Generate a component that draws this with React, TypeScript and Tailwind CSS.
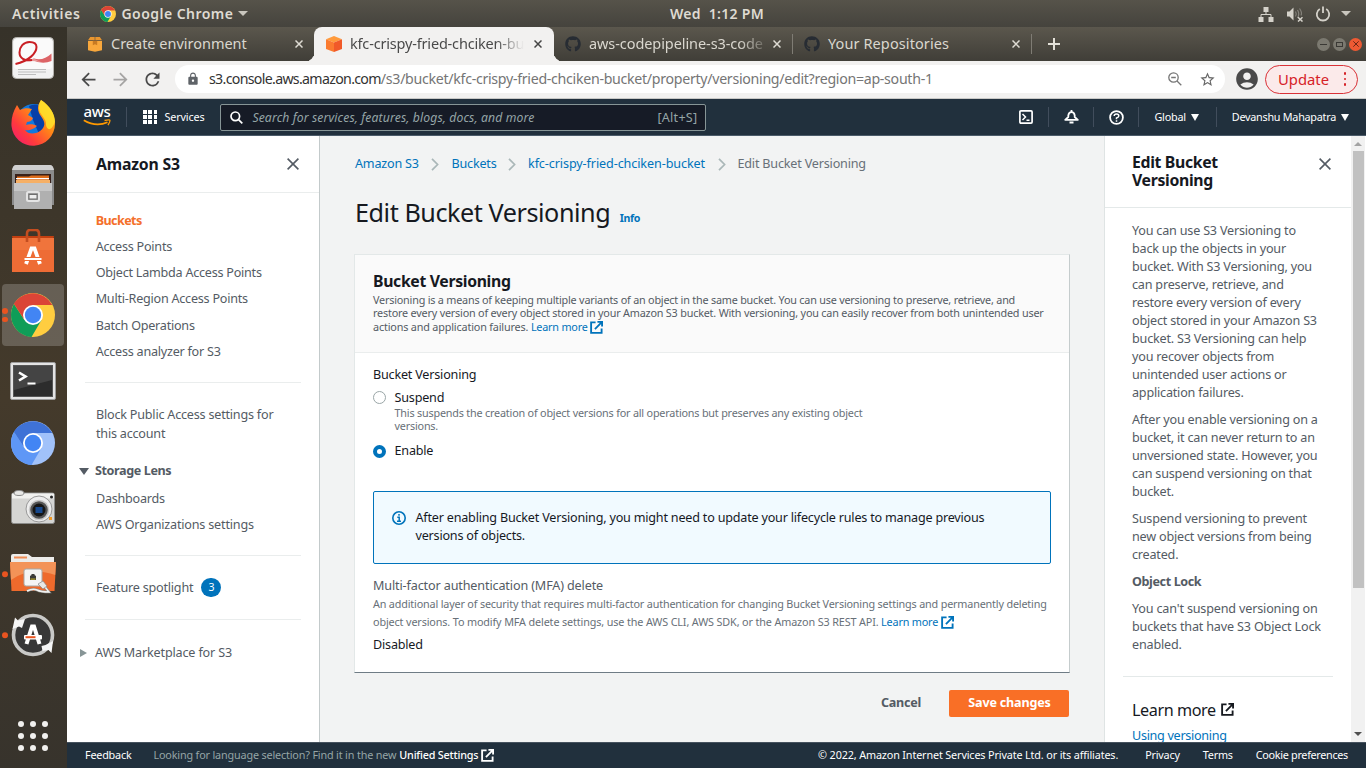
import type { ReactNode } from "react";
import { FaGithub } from "react-icons/fa";
import { MdAccountCircle, MdArrowBack, MdArrowForward, MdLock, MdRefresh, MdStarBorder } from "react-icons/md";

/* ---------- shared icons ---------- */

function ExternalIcon({ className }: { className?: string }) {
  return (
    <svg viewBox="0 0 14 14" className={className} fill="none" stroke="currentColor" strokeWidth="2">
      <path d="M6 1.5H1.2v11.3h11.3V8" />
      <path d="M8 1h5v5M12.7 1.3L5.3 8.7" />
    </svg>
  );
}

function CloseIcon({ className }: { className?: string }) {
  return (
    <svg viewBox="0 0 12 12" className={className} fill="none" stroke="currentColor" strokeWidth="1.6">
      <path d="M.6.6l10.8 10.8M11.4.6L.6 11.4" />
    </svg>
  );
}

function ChromeIcon({ className, colors }: { className?: string; colors: [string, string, string, string] }) {
  const [top, right, left, core] = colors;
  return (
    <svg viewBox="0 0 44 44" className={className}>
      <circle cx="22" cy="22" r="22" fill={right} />
      <path d="M22 22L3 11A22 22 0 0 1 41 12H22z" fill={top} />
      <path d="M3 11A22 22 0 0 0 20.5 44L30.5 27 13.500 27z" fill={left} />
      <path d="M3 11L13.500 27 22 12H41A22 22 0 0 0 3 11z" fill={top} />
      <circle cx="22" cy="22" r="10" fill="#fff" />
      <circle cx="22" cy="22" r="8.200" fill={core} />
    </svg>
  );
}

const chromeColors: [string, string, string, string] = ["#db4437", "#ffcd40", "#0f9d58", "#4285f4"];
const chromiumColors: [string, string, string, string] = ["#3f72d6", "#a1c2fa", "#5e97f6", "#4285f4"];

/* ---------- desktop top bar ---------- */

function DesktopBar() {
  return (
    <header className="flex h-[27px] shrink-0 items-center bg-linear-to-b from-[#56534a] to-[#45433d] text-[14px] font-semibold text-[#dfdbd2]">
      <span className="ml-[12px] w-[88px] tracking-[0.6px]">Activities</span>
      <ChromeIcon className="size-[16px]" colors={chromeColors} />
      <span className="ml-[5.500px] w-[112px] tracking-[0.45px]">Google Chrome</span>
      <span className="ml-[4px] border-x-[5px] border-t-[5px] border-x-transparent border-t-[#c9c6be]" />
      <span className="ml-[422.500px] whitespace-pre tracking-[0.3px]">Wed  1:12 PM</span>
      <div className="ml-auto flex items-center pr-[15px]">
        <svg viewBox="0 0 16 16" className="size-[16px]" fill="#d5d2ca">
          <path d="M5.500 1h5v5h-5zM.5 11h5v5h-5zM10.500 11h5v5h-5z" />
          <path d="M8 5.500v3M3 11.500V8.500h10v3" fill="none" stroke="#d5d2ca" />
        </svg>
        <svg viewBox="0 0 18 16" className="ml-[12px] h-[16px] w-[18px]" fill="none">
          <path d="M1 5.500h2.500L7.500 1.500v13l-4-4H1z" fill="#d5d2ca" />
          <path d="M9.500 5.500q1.500 2.500 0 5M11.500 4q2.500 4 0 8M13.500 2.500q3 4 1.500 7" stroke="#85827b" strokeWidth="1.200" />
          <path d="M12 11.300l4.500 4.200M16.500 11.300L12 15.500" stroke="#d5d2ca" strokeWidth="1.500" />
        </svg>
        <svg viewBox="0 0 16 16" className="ml-[11px] size-[16px]" fill="none" stroke="#d5d2ca" strokeWidth="1.800">
          <path d="M4.800 3A6.200 6.200 0 1 0 11.200 3M8 .5v6.500" />
        </svg>
        <span className="ml-[10px] border-x-[5px] border-t-[5px] border-x-transparent border-t-[#c9c6be]" />
      </div>
    </header>
  );
}

/* ---------- dock ---------- */

function DockItem({ height, dots = 0, active = false, children }: { height: string; dots?: number; active?: boolean; children: ReactNode }) {
  return (
    <div className={`relative flex w-full items-center justify-center pr-[1px] ${height}`}>
      {active && <span className="absolute left-[2px] top-1/2 h-[62px] w-[62px] -translate-y-1/2 rounded-[4px] bg-white/20" />}
      <span className="absolute left-[2px] top-1/2 flex -translate-y-1/2 flex-col gap-[3px]">
        {Array.from({ length: dots }, (_, i) => (
          <span key={i} className="size-[5.500px] rounded-full bg-[#e95420]" />
        ))}
      </span>
      <span className="relative">{children}</span>
    </div>
  );
}

function Dock() {
  return (
    <aside className="flex w-[67px] shrink-0 flex-col items-center overflow-hidden bg-linear-to-b from-[#363229] via-[#443a2b] to-[#37332c]">
      <DockItem height="h-[61px]">
        <svg viewBox="0 0 42 42" className="size-[42px]">
          <rect x=".5" y=".5" width="41" height="41" rx="4" fill="#f1f1f1" stroke="#b5b3af" />
          <rect x="2" y="2" width="38" height="30" rx="3" fill="#fafafa" />
          <path d="M22 21.500Q31 24.500 39.500 16.500V24Q30 28 19 22.500z" fill="#dd6467" />
          <path d="M3.500 27Q12 22.500 22 21.800l7 3.200Q14 22.500 3.500 27z" fill="#e89a9a" />
          <path d="M3.500 27C17 24 24.500 16 24.500 10 24.500 6.500 21.500 5 17.500 5 11.500 5 7.500 10 7.500 15.500 7.500 21 12.500 24.500 20 23" fill="none" stroke="#c91f24" strokeWidth="2" />
          <path d="M6 32.500h28M6 35h28M6 37.500h18" stroke="#bdbdbd" strokeWidth="1.200" />
        </svg>
      </DockItem>
      <DockItem height="h-[70px]">
        <svg viewBox="0 0 44 46" className="h-[46px] w-[44px]">
          <defs>
            <linearGradient id="fox" x1="0" y1="1" x2="1" y2="0">
              <stop offset="0" stopColor="#f0147b" />
              <stop offset=".3" stopColor="#ff3a3d" />
              <stop offset=".62" stopColor="#ff8a16" />
              <stop offset="1" stopColor="#ffe226" />
            </linearGradient>
          </defs>
          <circle cx="23" cy="22" r="18" fill="#1179de" />
          <path d="M18 6q8-4 13 2l5 20-8 6-6-14z" fill="#073fa8" />
          <path d="M30 0c9 6 14 14 14 24a21.800 21.800 0 0 1-43.500 2C0 18 2 12 6 5l3 5c4-2 8-2 12-1l-4 6 5 3c-1 3-4 4-6 4l-1 3c3-1 8-1 11 1-3 3-8 5-12 4 4 6 16 4 19-4 2-7-6-10-6-18C27 4 29 2 30 0z" fill="url(#fox)" />
          <path d="M30 0c9 6 14 14 14 22-4 10-8 8-9 3 1-7-7-10-7-17 0-4 1-6 2-8z" fill="#ffe32b" opacity=".85" />
        </svg>
      </DockItem>
      <DockItem height="h-[58px]">
        <svg viewBox="0 0 42 44" className="h-[44px] w-[42px]">
          <path d="M4 0h34q3 0 4 6v34H0V6q1-6 4-6z" fill="#8b8b8b" />
          <path d="M4 0h34q3 0 4 5H0q1-5 4-5z" fill="#d0d0d0" />
          <path d="M3 9h36v11H3z" fill="#382019" />
          <path d="M5 11.500h12l2-1h18v7H5z" fill="#df6e1c" />
          <path d="M4 13h33v1.300H4z" fill="#fff" />
          <path d="M4 15h34v3H4z" fill="#f6b066" />
          <path d="M2 18h38v26H2z" fill="#b0b0b0" />
          <path d="M2 18h38v8H2z" fill="#c6c6c6" />
          <rect x="15" y="27" width="12" height="9" rx="1.500" fill="#999" stroke="#e4e4e4" strokeWidth="2" />
          <rect x="17" y="29.500" width="8" height="4.500" fill="#eee" stroke="#6f6f6f" />
        </svg>
      </DockItem>
      <DockItem height="h-[68px]">
        <svg viewBox="0 0 42 43" className="h-[43px] w-[42px]">
          <path d="M0 7h42l-2 8H2z" fill="#c33f10" />
          <path d="M0 9h42v34H0z" fill="#ee6c35" />
          <path d="M0 9h42v12H0z" fill="#f0743c" />
          <path d="M15 13V5q0-4 3-4h6q3 0 3 4v8" fill="none" stroke="#c34d20" strokeWidth="2.600" />
          <path d="M14 35L19.500 19.500h3L28 35" fill="none" stroke="#fff" strokeWidth="3.800" />
          <path d="M12 28.500h18v3H12z" fill="#fff" stroke="#ee6c35" strokeWidth="1" />
        </svg>
      </DockItem>
      <DockItem height="h-[62px]" dots={2} active>
        <ChromeIcon className="size-[44px]" colors={chromeColors} />
      </DockItem>
      <DockItem height="h-[69px]">
        <svg viewBox="0 0 46 38" className="h-[38px] w-[46px]">
          <rect x=".5" y=".5" width="45" height="37" rx="1.500" fill="#e4e4e4" stroke="#9d9d9d" />
          <rect x="3.500" y="3.500" width="39" height="31" fill="#2c2c2c" stroke="#555" />
          <path d="M4 4h38v14L4 28z" fill="#444" />
          <path d="M9 10.500l6.500 4-6.500 4" fill="none" stroke="#fff" strokeWidth="2.600" />
          <path d="M17.500 21.500h8" stroke="#fff" strokeWidth="2" />
        </svg>
      </DockItem>
      <DockItem height="h-[56px]">
        <ChromeIcon className="size-[44px]" colors={chromiumColors} />
      </DockItem>
      <DockItem height="h-[72px]">
        <svg viewBox="0 0 44 34" className="h-[34px] w-[44px]">
          <rect x=".5" y="3" width="43" height="30.500" rx="2" fill="#d5d5d3" stroke="#8b8b89" />
          <rect x="1" y="3.500" width="42" height="5" fill="#f1f1ef" />
          <ellipse cx="8" cy="3" rx="5" ry="2.500" fill="#e8e8e6" stroke="#8a8a8a" />
          <circle cx="28" cy="19" r="13" fill="#ededed" stroke="#989898" />
          <circle cx="28" cy="20" r="9.500" fill="#555" stroke="#c9c9c9" strokeWidth="1.500" />
          <circle cx="28" cy="20" r="6.500" fill="#161616" />
          <rect x="24.500" y="17" width="7" height="6" fill="#17488c" />
          <circle cx="40.500" cy="7" r="1.500" fill="#222" />
          <rect x="38" y="27" width="3" height="3" fill="#f39a24" />
        </svg>
      </DockItem>
      <DockItem height="h-[62px]" dots={1}>
        <svg viewBox="0 0 46 40" className="h-[40px] w-[46px]">
          <path d="M1 2q0-2 2-2h15l4 3h22v12H1z" fill="#ececea" />
          <path d="M4 2.500h13v2H4z" fill="#ef8c55" />
          <path d="M0 8h46l-1.500 29h-43z" fill="#ee6a2c" />
          <path d="M0 8h46l-.8 13Q20 12 1 26z" fill="#f39358" />
          <rect x="14" y="15" width="18" height="17" rx="2" fill="#f5f5f5" stroke="#a7a7a5" />
          <path d="M20 26v-4l1.500-1v-1h3v1l1.500 1v4z" fill="#3c3c3a" />
          <path d="M20.500 24.500h5v1.200h-5z" fill="#b5a42b" />
          <path d="M17 37q6-3 10-1t12 2l-4-5" fill="none" stroke="#8c8c8a" strokeWidth="2.600" />
          <path d="M17 37q6-3 10-1t12 2l-4-5" fill="none" stroke="#f2f2f0" strokeWidth="1.400" />
          <path d="M28 30l5-3 4 5-4 3z" fill="#e8e8e6" stroke="#888" strokeWidth=".7" />
        </svg>
      </DockItem>
      <DockItem height="h-[60px]" dots={1}>
        <svg viewBox="0 0 44 44" className="size-[44px]">
          <circle cx="22" cy="22" r="18" fill="#373737" />
          <circle cx="22" cy="22" r="19.500" fill="none" stroke="#c9c9c7" strokeWidth="3.600" />
          <path d="M4 4.500L7 7.500 14 6 11 15l-3-1.500L1.500 16z" fill="#f5f5f5" />
          <path d="M42 28L40.500 40l-3-3-6 1-1-5 4-1z" fill="#f5f5f5" />
          <path d="M15.500 31L21 13.500h2L28.500 31" fill="none" stroke="#fff" strokeWidth="4" />
          <rect x="13" y="22" width="18" height="4.500" rx="1" fill="#fff" />
          <rect x="14.500" y="23.200" width="10" height="2" fill="#e95420" />
        </svg>
      </DockItem>
      <div className="mr-[1px] mt-[56px] grid grid-cols-3 gap-[6px]">
        {Array.from({ length: 9 }, (_, i) => (
          <span key={i} className="size-[6px] rounded-full bg-[#f1f0ee]" />
        ))}
      </div>
    </aside>
  );
}

/* ---------- browser chrome ---------- */

function TabClose({ dark = false }: { dark?: boolean }) {
  return (
    <svg
      viewBox="0 0 8 8"
      className={`size-[8px] shrink-0 ${dark ? "text-[#454545]" : "text-[#dedbd3]"}`}
      stroke="currentColor"
      strokeWidth="1.500"
    >
      <path d="M.5.5l7 7M7.500.5l-7 7" />
    </svg>
  );
}

function TabStrip() {
  return (
    <div className="flex h-[34px] shrink-0 items-center bg-linear-to-b from-[#5b574d] to-[#403e38] text-[14.500px] text-[#dad7cf]">
      <div className="flex h-full w-[247px] items-center pl-[20px] pr-[11px]">
        <svg viewBox="0 0 16 16" className="size-[16px]">
          <path d="M3.200 1h4.500v3.300H1zM8.300 1h4.500L15 4.300H8.300z" fill="#e8952f" />
          <path d="M1 5h14v9.300L8 15.700 1 14.300z" fill="#f9a83c" />
          <path d="M5.800 4.800h4.400v4.400L8 8.300l-2.200.9z" fill="#c87a22" />
        </svg>
        <span className="ml-[8px] grow tracking-[-0.01px]">Create environment</span>
        <TabClose />
      </div>
      <div className="relative flex h-full w-[240px] items-center rounded-t-[8px] bg-[#f2f1f0] pl-[12px] pr-[12px] text-[#4a4a4a]">
        <span className="absolute -left-[8px] bottom-0 size-[8px] rounded-br-[8px] shadow-[3px_3px_0_0_#f2f1f0]" />
        <span className="absolute -right-[8px] bottom-0 size-[8px] rounded-bl-[8px] shadow-[-3px_3px_0_0_#f2f1f0]" />
        <svg viewBox="0 0 16 16" className="size-[16px] shrink-0">
          <path d="M8 0l8 3.300L8 6.600 0 3.300z" fill="#ff9a3c" />
          <path d="M0 3.300l8 3.300V16l-8-3z" fill="#fb7b30" />
          <path d="M16 3.300L8 6.600V16l8-3z" fill="#f15a29" />
        </svg>
        <span className="ml-[8px] whitespace-nowrap tracking-[-0.18px] mask-r-from-84% mask-r-to-100%">kfc-crispy-fried-chciken-bu</span>
        <span className="ml-auto"><TabClose dark /></span>
      </div>
      <div className="flex h-full w-[238px] items-center pl-[11px] pr-[11px]">
        <FaGithub className="size-[16px] shrink-0 text-[#272c33]" />
        <span className="ml-[8px] whitespace-nowrap tracking-[-0.08px] mask-r-from-86% mask-r-to-105%">aws-codepipeline-s3-code</span>
        <span className="ml-auto"><TabClose /></span>
      </div>
      <span className="h-[20px] w-px bg-[#7f7c74]" />
      <div className="flex h-full w-[238px] items-center pl-[11px] pr-[11px]">
        <FaGithub className="size-[16px] shrink-0 text-[#272c33]" />
        <span className="ml-[8px] grow tracking-[0.1px]">Your Repositories</span>
        <TabClose />
      </div>
      <span className="h-[20px] w-px bg-[#7f7c74]" />
      <svg viewBox="0 0 12 12" className="ml-[16px] size-[12px]" stroke="#e3e0d8" strokeWidth="2">
        <path d="M6 0v12M0 6h12" />
      </svg>
      <div className="ml-auto flex items-center gap-[3px] pr-[4px]">
        <span className="flex size-[13px] items-center justify-center rounded-full bg-[#7b7970]"><span className="h-px w-[7px] bg-[#3a3935]" /></span>
        <span className="flex size-[13px] items-center justify-center rounded-full bg-[#7b7970]"><span className="h-[5px] w-[7px] border border-[#3a3935]" /></span>
        <span className="flex size-[13px] items-center justify-center rounded-full bg-[#ee5a33]"><CloseIcon className="size-[6px] text-[#4a1c10]" /></span>
      </div>
    </div>
  );
}

function Toolbar() {
  return (
    <div className="flex h-[38px] shrink-0 items-center border-b border-[#c9c9c7] bg-[#f2f1f0] pb-[1px]">
      <MdArrowBack className="ml-[11px] size-[21px] text-[#4a4a4a]" />
      <MdArrowForward className="ml-[11px] size-[21px] text-[#a5a4a3]" />
      <MdRefresh className="ml-[11px] size-[21px] text-[#4a4a4a]" />
      <div className="ml-[12px] flex h-[28px] w-[1050px] items-center rounded-full bg-white pl-[11px] pr-[9px]">
        <MdLock className="size-[14px] text-[#5f6368]" />
        <p className="ml-[9px] whitespace-nowrap text-[14.200px] leading-[20px] text-[#757575]">
          <span className="tracking-[-0.69px] text-[#333]">s3.console.aws.amazon.com</span>
          <span className="tracking-[-0.3px]">/s3/bucket/kfc-crispy-fried-chciken-bucket/property/versioning/edit?region=ap-south-1</span>
        </p>
        <svg viewBox="0 0 14 14" className="ml-auto size-[14px]" fill="none" stroke="#757575" strokeWidth="1.300">
          <circle cx="5.500" cy="5.500" r="4.700" />
          <path d="M9 9l4.300 4.300M3.200 5.500h4.600" />
        </svg>
        <MdStarBorder className="ml-[17px] size-[17px] text-[#666]" />
      </div>
      <MdAccountCircle className="ml-[9px] size-[26px] text-[#4a4a4a]" />
      <div className="ml-[5px] flex h-[29px] w-[93px] items-center rounded-full border border-[#d93137] bg-[#fbeaea] pl-[12px] text-[14.800px] text-[#d62127]">
        <span className="leading-[20px]">Update</span>
        <span className="ml-[14.500px] flex flex-col gap-[2.500px]">
          {[0, 1, 2].map((i) => (
            <span key={i} className="size-[2.800px] rounded-full bg-[#d62127]" />
          ))}
        </span>
      </div>
    </div>
  );
}

/* ---------- AWS console ---------- */

function NavDivider({ className }: { className?: string }) {
  return <span className={`h-[20px] w-px shrink-0 bg-[#414d5c] ${className ?? ""}`} />;
}

function Caret({ className }: { className?: string }) {
  return <span className={`border-x-[4px] border-t-[7px] border-x-transparent border-t-white ${className ?? ""}`} />;
}

function ConsoleNav() {
  return (
    <nav className="flex h-[37px] shrink-0 items-center border-b border-[#4b5b69] bg-[#21303d] text-[10.800px] text-white">
      <div className="ml-[15px] flex w-[30px] flex-col items-center">
        <span className="h-[12px] text-[15px] font-medium leading-[9px] tracking-[-0.3px]">aws</span>
        <svg viewBox="0 0 28 8" className="h-[8px] w-[28px]" fill="none" stroke="#f90">
          <path d="M.8 1.200Q13 8.500 24.500 3.200" strokeWidth="1.700" />
          <path d="M21.500 1.500Q27 .2 27 1.500T25 6.200" strokeWidth="1.300" />
        </svg>
      </div>
      <NavDivider className="ml-[14px]" />
      <div className="ml-[16px] grid grid-cols-3 gap-[1.500px]">
        {Array.from({ length: 9 }, (_, i) => (
          <span key={i} className="size-[3.800px] bg-white" />
        ))}
      </div>
      <span className="ml-[7px] w-[56px] tracking-[-0.12px]">Services</span>
      <div className="flex h-[27px] w-[486px] items-center rounded-[2px] border border-[#879596] bg-[#161b26] pl-[9px] pr-[8px] text-[12.200px] text-[#95a5a6]">
        <svg viewBox="0 0 13 13" className="size-[13px]" fill="none" stroke="#fff" strokeWidth="1.700">
          <circle cx="5.300" cy="5.300" r="4.300" />
          <path d="M8.300 8.300l4 4" />
        </svg>
        <span className="ml-[9px] grow pt-[2px] italic tracking-[0.12px]">Search for services, features, blogs, docs, and more</span>
        <span className="pt-[2px] text-[12.600px] tracking-[0.25px]">[Alt+S]</span>
      </div>
      <svg viewBox="0 0 14 14" className="ml-[313px] size-[14px]" fill="none" stroke="#fff" strokeWidth="1.700">
        <rect x=".9" y=".9" width="12.200" height="12.200" rx="1" />
        <path d="M3.500 4l3 3-3 3M7.500 10.300h3" strokeWidth="1.500" />
      </svg>
      <NavDivider className="ml-[15px]" />
      <svg viewBox="0 0 15 14" className="ml-[15px] h-[14px] w-[15px]" fill="none" stroke="#fff" strokeWidth="1.800">
        <path d="M1.200 9.800L4.300 7V5.300Q4.800 2.200 7.500 2.200T10.700 5.300V7L13.800 9.800z" strokeLinejoin="round" />
        <path d="M7.500 0v2M5.500 12.500h4" />
      </svg>
      <NavDivider className="ml-[14px]" />
      <svg viewBox="0 0 15 15" className="ml-[15px] size-[15px]" fill="none" stroke="#fff" strokeWidth="1.800">
        <circle cx="7.500" cy="7.500" r="6.400" />
        <path d="M5.200 6Q5.200 3.900 7.500 3.900T9.800 6Q9.800 7.300 7.500 8V9.200M7.500 10.200v1.500" strokeWidth="1.500" />
      </svg>
      <NavDivider className="ml-[14px]" />
      <span className="ml-[15px] tracking-[-0.2px]">Global</span>
      <Caret className="ml-[5px]" />
      <NavDivider className="ml-[17px]" />
      <span className="ml-[15px] tracking-[-0.26px]">Devanshu Mahapatra</span>
      <Caret className="ml-[5px]" />
    </nav>
  );
}

function SideLink({ children }: { children: ReactNode }) {
  return <a className="block h-[26.200px] leading-[26.200px]">{children}</a>;
}

function SideNav() {
  return (
    <aside className="flex w-[253px] shrink-0 flex-col border-r border-[#c3cacb] bg-white text-[12.600px] tracking-[-0.24px] text-[#545b64]">
      <div className="flex h-[57px] shrink-0 items-center justify-between border-b border-[#eaeded] pl-[29px] pr-[20px]">
        <h2 className="text-[15.800px] font-bold leading-[20px] tracking-[-0.2px] text-[#16191f]">Amazon S3</h2>
        <CloseIcon className="size-[12px]" />
      </div>
      <div className="pl-[28.700px] pt-[14.800px]">
        <a className="block h-[26.200px] font-bold leading-[26.200px] tracking-[-0.6px] text-[#f4702b]">Buckets</a>
        <SideLink>Access Points</SideLink>
        <SideLink>Object Lambda Access Points</SideLink>
        <SideLink>Multi-Region Access Points</SideLink>
        <SideLink>Batch Operations</SideLink>
        <SideLink>Access analyzer for S3</SideLink>
      </div>
      <hr className="ml-[18px] mr-[18px] mt-[17.200px] border-[#eaeded]" />
      <p className="pl-[29px] pt-[22px] leading-[19px] tracking-[-0.21px]">
        Block Public Access settings for
        <br />
        this account
      </p>
      <div className="mt-[18px] flex h-[20px] items-center pl-[11.500px]">
        <span className="border-x-[5px] border-t-[7px] border-x-transparent border-t-[#545b64]" />
        <span className="ml-[6.500px] font-bold tracking-[-0.4px]">Storage Lens</span>
      </div>
      <div className="pl-[29px] pt-[5px]">
        <SideLink>Dashboards</SideLink>
        <a className="block h-[26.200px] leading-[26.200px] tracking-[-0.19px]">AWS Organizations settings</a>
      </div>
      <hr className="ml-[18px] mr-[18px] mt-[17px] border-[#eaeded]" />
      <div className="mt-[22px] flex h-[19px] items-center pl-[29px]">
        <span className="tracking-[-0.21px]">Feature spotlight</span>
        <span className="ml-[8px] flex h-[19px] w-[20px] items-center justify-center rounded-full bg-[#0073bb] text-[10.500px] text-white">3</span>
      </div>
      <hr className="ml-[18px] mr-[18px] mt-[22px] border-[#eaeded]" />
      <div className="mt-[23px] flex h-[20px] items-center pl-[13px]">
        <span className="border-y-[4.500px] border-l-[7px] border-y-transparent border-l-[#879596]" />
        <span className="ml-[8px] tracking-[-0.16px]">AWS Marketplace for S3</span>
      </div>
    </aside>
  );
}

function Chevron() {
  return (
    <svg viewBox="0 0 8 13" className="h-[13px] w-[8px]" fill="none" stroke="#aab7b8" strokeWidth="1.700">
      <path d="M1 .8l5.600 5.700L1 12.200" />
    </svg>
  );
}

function VersioningCard() {
  return (
    <section className="-ml-[1px] mt-[25px] h-[419px] w-[716px] border border-[#e3e8e8] border-b-[#6f7c85] border-r-[#c5cccd] bg-white">
      <div className="h-[98px] border-b border-[#eaeded] bg-[#fafafa] pl-[18px] pt-[16px]">
        <h2 className="text-[15.800px] font-bold leading-[20px] tracking-[-0.34px] text-[#16191f]">Bucket Versioning</h2>
        <p className="mt-[1.800px] whitespace-nowrap text-[10.800px] leading-[13.400px] tracking-[-0.2px] text-[#545b64]">
          Versioning is a means of keeping multiple variants of an object in the same bucket. You can use versioning to preserve, retrieve, and
          <br />
          <span className="tracking-[-0.19px]">restore every version of every object stored in your Amazon S3 bucket. With versioning, you can easily recover from both unintended user</span>
          <br />
          <span className="tracking-[-0.16px]">actions and application failures.</span>{" "}
          <a className="text-[#0073bb]">
            Learn more <ExternalIcon className="-mt-px inline size-[13px]" />
          </a>
        </p>
      </div>
      <div className="pl-[18px] pr-[18px] pt-[13px] text-[12.600px] tracking-[-0.2px] text-[#16191f]">
        <p className="h-[18px] leading-[18px]">Bucket Versioning</p>
        <div className="mt-[5px] flex">
          <span className="mt-[2px] size-[13px] rounded-full border border-[#9aa6a7]" />
          <div className="ml-[8.500px]">
            <p className="h-[18px] leading-[18px]">Suspend</p>
            <p className="-mt-[1px] text-[10.800px] leading-[13px] tracking-[-0.19px] text-[#687078]">
              This suspends the creation of object versions for all operations but preserves any existing object
              <br />
              versions.
            </p>
          </div>
        </div>
        <div className="mt-[10px] flex h-[18px] items-center">
          <span className="size-[13px] rounded-full border-4 border-[#0073bb]" />
          <span className="ml-[8.500px] leading-[18px]">Enable</span>
        </div>
        <div className="mt-[31px] flex h-[73px] w-[678px] rounded-[2px] border border-[#0073bb] bg-[#f1faff] pl-[18px] pt-[17px]">
          <svg viewBox="0 0 14 14" className="mt-[2px] size-[14px]" fill="none" stroke="#0073bb" strokeWidth="1.600">
            <circle cx="7" cy="7" r="6.200" />
            <path d="M7 3v1.700M5.300 6.300H7.200V10M5 10.300h4" strokeWidth="1.500" />
          </svg>
          <p className="ml-[9.500px] leading-[18px] tracking-[-0.205px]">
            After enabling Bucket Versioning, you might need to update your lifecycle rules to manage previous
            <br />
            versions of objects.
          </p>
        </div>
        <p className="mt-[13px] h-[18px] leading-[18px] tracking-[-0.13px] text-[#545b64]">Multi-factor authentication (MFA) delete</p>
        <p className="whitespace-nowrap text-[10.800px] leading-[18px] tracking-[-0.17px] text-[#687078]">
          An additional layer of security that requires multi-factor authentication for changing Bucket Versioning settings and permanently deleting
          <br />
          <span className="tracking-[-0.13px]">object versions. To modify MFA delete settings, use the AWS CLI, AWS SDK, or the Amazon S3 REST API.</span>{" "}
          <a className="text-[#0073bb]">
            Learn more <ExternalIcon className="-mt-px inline size-[13px]" />
          </a>
        </p>
        <p className="mt-[5px] h-[18px] leading-[18px]">Disabled</p>
      </div>
    </section>
  );
}

function MainContent() {
  return (
    <main className="flex w-[784px] shrink-0 flex-col bg-[#f2f3f3] pl-[35px] text-[12.600px] tracking-[-0.2px]">
      <div className="mt-[19px] flex h-[19px] items-center text-[#0073bb]">
        <a className="w-[76px]">Amazon S3</a>
        <Chevron />
        <a className="ml-[12.500px] w-[56px]">Buckets</a>
        <Chevron />
        <a className="ml-[12.500px] w-[189.500px] tracking-[-0.1px]">kfc-crispy-fried-chciken-bucket</a>
        <Chevron />
        <span className="ml-[12px] tracking-[-0.19px] text-[#687078]">Edit Bucket Versioning</span>
      </div>
      <div className="mt-[21px] flex h-[34px] items-baseline">
        <h1 className="text-[25.200px] leading-[34px] tracking-[-0.45px] text-[#16191f]">Edit Bucket Versioning</h1>
        <a className="ml-[9.500px] text-[10.600px] font-bold tracking-[-0.35px] text-[#0073bb]">Info</a>
      </div>
      <VersioningCard />
      <div className="mt-[17px] flex w-[714px] items-center justify-end font-bold">
        <button className="mr-[28px] tracking-[-0.25px] text-[#545b64]">Cancel</button>
        <button className="h-[27px] w-[120px] rounded-[2px] bg-[#f96f26] pl-[1px] tracking-[-0.2px] text-white">Save changes</button>
      </div>
    </main>
  );
}

function HelpPanel() {
  return (
    <aside className="w-[247px] shrink-0 overflow-hidden border-l border-[#dfe4e4] bg-white text-[12.600px] leading-[18px] tracking-[-0.2px] text-[#545b64]">
      <div className="flex h-[72px] justify-between border-b border-[#e4e9e9] pl-[27px] pr-[20px] pt-[17px]">
        <h2 className="w-[120px] text-[15.800px] font-bold leading-[18px] tracking-[-0.33px] text-[#16191f]">Edit Bucket Versioning</h2>
        <CloseIcon className="mt-[5px] size-[12px]" />
      </div>
      <div className="flex flex-col gap-[9px] whitespace-pre-line pl-[27px] pt-[14px]">
        <p>{"You can use S3 Versioning to\nback up the objects in your\nbucket. With S3 Versioning, you\ncan preserve, retrieve, and\nrestore every version of every\nobject stored in your Amazon S3\nbucket. S3 Versioning can help\nyou recover objects from\nunintended user actions or\napplication failures."}</p>
        <p>{"After you enable versioning on a\nbucket, it can never return to an\nunversioned state. However, you\ncan suspend versioning on that\nbucket."}</p>
        <p>{"Suspend versioning to prevent\nnew object versions from being\ncreated."}</p>
        <p className="font-bold tracking-[-0.4px]">Object Lock</p>
        <p className="tracking-[-0.17px]">{"You can't suspend versioning on\nbuckets that have S3 Object Lock\nenabled."}</p>
      </div>
      <hr className="ml-[18px] mr-[18px] mt-[22px] border-[#e4e9e9]" />
      <h3 className="mt-[22px] flex h-[21px] items-center pl-[27px] text-[16.200px] tracking-[-0.43px] text-[#16191f]">
        Learn more <ExternalIcon className="ml-[5px] size-[13px]" />
      </h3>
      <a className="mt-[7px] block pl-[27px] tracking-[-0.3px] text-[#0073bb]">Using versioning</a>
    </aside>
  );
}

function Scrollbar() {
  return (
    <div className="flex w-[14px] shrink-0 flex-col items-center justify-between bg-[#f1f1f1]">
      <div className="flex flex-col items-center">
        <span className="mb-[5px] mt-[6px] border-x-[4px] border-b-[4px] border-x-transparent border-b-[#a3a3a3]" />
        <span className="h-[437px] w-[11px] bg-[#c1c1c1]" />
      </div>
      <span className="mb-[6px] border-x-[4px] border-t-[4px] border-x-transparent border-t-[#505050]" />
    </div>
  );
}

function Footer() {
  return (
    <footer className="flex h-[26px] shrink-0 items-center border-t border-[#46525e] bg-[#21303d] text-[10.800px] tracking-[-0.2px] text-white">
      <span className="ml-[18px] w-[68.500px]">Feedback</span>
      <span className="tracking-[-0.16px] text-[#95a5a6]">Looking for language selection? Find it in the new</span>
      <span className="ml-[3px] font-medium">Unified Settings</span>
      <ExternalIcon className="ml-[3px] size-[13px]" />
      <span className="ml-auto tracking-[-0.14px]">© 2022, Amazon Internet Services Private Ltd. or its affiliates.</span>
      <span className="ml-[27px]">Privacy</span>
      <span className="ml-[23px]">Terms</span>
      <span className="ml-[23px] mr-[18px] tracking-[-0.3px]">Cookie preferences</span>
    </footer>
  );
}

export default function App() {
  return (
    <div className="flex h-[768px] w-[1366px] flex-col overflow-hidden font-['Noto_Sans','Open_Sans',sans-serif]">
      <DesktopBar />
      <div className="flex min-h-0 grow">
        <Dock />
        <div className="flex w-[1299px] flex-col">
          <TabStrip />
          <Toolbar />
          <ConsoleNav />
          <div className="flex min-h-0 grow overflow-hidden">
            <SideNav />
            <MainContent />
            <HelpPanel />
            <Scrollbar />
          </div>
          <Footer />
        </div>
      </div>
    </div>
  );
}
